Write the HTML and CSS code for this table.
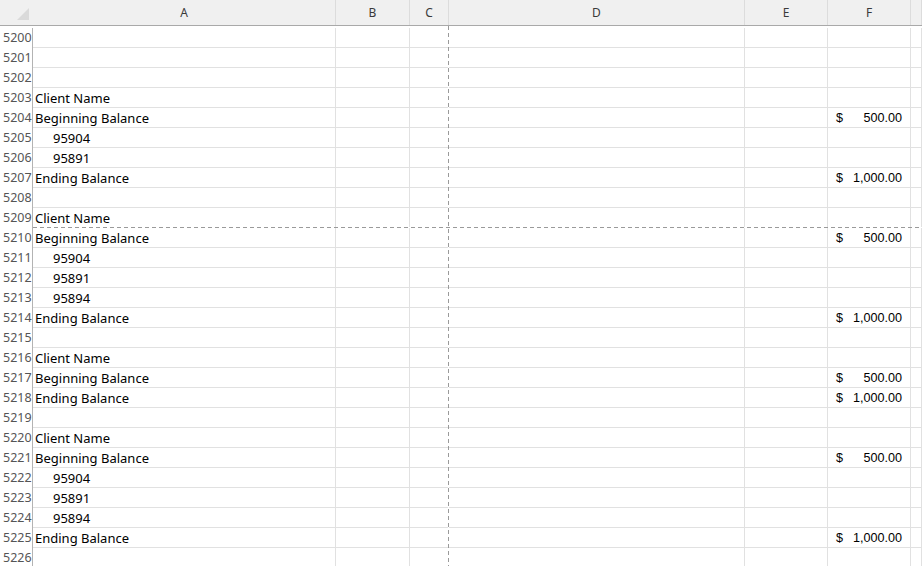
FILE: index.html
```html
<!DOCTYPE html>
<html lang="en">
<head>
  <meta charset="UTF-8" />
  <title>Client Balances</title>
  <link rel="stylesheet" href="styles.css">
</head>
<body>

  <div class="sheet">

    <!-- Column headers -->
    <div class="col-heads">
      <div class="corner">
        <svg width="32" height="25" viewBox="0 0 32 25"><polygon points="29,8 29,20 17,20" fill="#dadada"/></svg>
      </div>
      <div class="ch a">A</div>
      <div class="ch b">B</div>
      <div class="ch c">C</div>
      <div class="ch d">D</div>
      <div class="ch e">E</div>
      <div class="ch f">F</div>
      <div class="ch g"></div>
    </div>

    <!-- Rows -->
    <div class="rows">
      <div class="row"><div class="rn">5200</div><div class="cell a"></div><div class="cell b"></div><div class="cell c"></div><div class="cell d"></div><div class="cell e"></div><div class="cell f"></div><div class="cell g"></div></div>
      <div class="row"><div class="rn">5201</div><div class="cell a"></div><div class="cell b"></div><div class="cell c"></div><div class="cell d"></div><div class="cell e"></div><div class="cell f"></div><div class="cell g"></div></div>
      <div class="row"><div class="rn">5202</div><div class="cell a"></div><div class="cell b"></div><div class="cell c"></div><div class="cell d"></div><div class="cell e"></div><div class="cell f"></div><div class="cell g"></div></div>
      <div class="row"><div class="rn">5203</div><div class="cell a">Client Name</div><div class="cell b"></div><div class="cell c"></div><div class="cell d"></div><div class="cell e"></div><div class="cell f"></div><div class="cell g"></div></div>
      <div class="row"><div class="rn">5204</div><div class="cell a">Beginning Balance</div><div class="cell b"></div><div class="cell c"></div><div class="cell d"></div><div class="cell e"></div><div class="cell f money"><span>$</span><span>500.00</span></div><div class="cell g"></div></div>
      <div class="row"><div class="rn">5205</div><div class="cell a indent">95904</div><div class="cell b"></div><div class="cell c"></div><div class="cell d"></div><div class="cell e"></div><div class="cell f"></div><div class="cell g"></div></div>
      <div class="row"><div class="rn">5206</div><div class="cell a indent">95891</div><div class="cell b"></div><div class="cell c"></div><div class="cell d"></div><div class="cell e"></div><div class="cell f"></div><div class="cell g"></div></div>
      <div class="row"><div class="rn">5207</div><div class="cell a">Ending Balance</div><div class="cell b"></div><div class="cell c"></div><div class="cell d"></div><div class="cell e"></div><div class="cell f money"><span>$</span><span>1,000.00</span></div><div class="cell g"></div></div>
      <div class="row"><div class="rn">5208</div><div class="cell a"></div><div class="cell b"></div><div class="cell c"></div><div class="cell d"></div><div class="cell e"></div><div class="cell f"></div><div class="cell g"></div></div>
      <div class="row"><div class="rn">5209</div><div class="cell a">Client Name</div><div class="cell b"></div><div class="cell c"></div><div class="cell d"></div><div class="cell e"></div><div class="cell f"></div><div class="cell g"></div></div>
      <div class="row"><div class="rn">5210</div><div class="cell a">Beginning Balance</div><div class="cell b"></div><div class="cell c"></div><div class="cell d"></div><div class="cell e"></div><div class="cell f money"><span>$</span><span>500.00</span></div><div class="cell g"></div></div>
      <div class="row"><div class="rn">5211</div><div class="cell a indent">95904</div><div class="cell b"></div><div class="cell c"></div><div class="cell d"></div><div class="cell e"></div><div class="cell f"></div><div class="cell g"></div></div>
      <div class="row"><div class="rn">5212</div><div class="cell a indent">95891</div><div class="cell b"></div><div class="cell c"></div><div class="cell d"></div><div class="cell e"></div><div class="cell f"></div><div class="cell g"></div></div>
      <div class="row"><div class="rn">5213</div><div class="cell a indent">95894</div><div class="cell b"></div><div class="cell c"></div><div class="cell d"></div><div class="cell e"></div><div class="cell f"></div><div class="cell g"></div></div>
      <div class="row"><div class="rn">5214</div><div class="cell a">Ending Balance</div><div class="cell b"></div><div class="cell c"></div><div class="cell d"></div><div class="cell e"></div><div class="cell f money"><span>$</span><span>1,000.00</span></div><div class="cell g"></div></div>
      <div class="row"><div class="rn">5215</div><div class="cell a"></div><div class="cell b"></div><div class="cell c"></div><div class="cell d"></div><div class="cell e"></div><div class="cell f"></div><div class="cell g"></div></div>
      <div class="row"><div class="rn">5216</div><div class="cell a">Client Name</div><div class="cell b"></div><div class="cell c"></div><div class="cell d"></div><div class="cell e"></div><div class="cell f"></div><div class="cell g"></div></div>
      <div class="row"><div class="rn">5217</div><div class="cell a">Beginning Balance</div><div class="cell b"></div><div class="cell c"></div><div class="cell d"></div><div class="cell e"></div><div class="cell f money"><span>$</span><span>500.00</span></div><div class="cell g"></div></div>
      <div class="row"><div class="rn">5218</div><div class="cell a">Ending Balance</div><div class="cell b"></div><div class="cell c"></div><div class="cell d"></div><div class="cell e"></div><div class="cell f money"><span>$</span><span>1,000.00</span></div><div class="cell g"></div></div>
      <div class="row"><div class="rn">5219</div><div class="cell a"></div><div class="cell b"></div><div class="cell c"></div><div class="cell d"></div><div class="cell e"></div><div class="cell f"></div><div class="cell g"></div></div>
      <div class="row"><div class="rn">5220</div><div class="cell a">Client Name</div><div class="cell b"></div><div class="cell c"></div><div class="cell d"></div><div class="cell e"></div><div class="cell f"></div><div class="cell g"></div></div>
      <div class="row"><div class="rn">5221</div><div class="cell a">Beginning Balance</div><div class="cell b"></div><div class="cell c"></div><div class="cell d"></div><div class="cell e"></div><div class="cell f money"><span>$</span><span>500.00</span></div><div class="cell g"></div></div>
      <div class="row"><div class="rn">5222</div><div class="cell a indent">95904</div><div class="cell b"></div><div class="cell c"></div><div class="cell d"></div><div class="cell e"></div><div class="cell f"></div><div class="cell g"></div></div>
      <div class="row"><div class="rn">5223</div><div class="cell a indent">95891</div><div class="cell b"></div><div class="cell c"></div><div class="cell d"></div><div class="cell e"></div><div class="cell f"></div><div class="cell g"></div></div>
      <div class="row"><div class="rn">5224</div><div class="cell a indent">95894</div><div class="cell b"></div><div class="cell c"></div><div class="cell d"></div><div class="cell e"></div><div class="cell f"></div><div class="cell g"></div></div>
      <div class="row"><div class="rn">5225</div><div class="cell a">Ending Balance</div><div class="cell b"></div><div class="cell c"></div><div class="cell d"></div><div class="cell e"></div><div class="cell f money"><span>$</span><span>1,000.00</span></div><div class="cell g"></div></div>
      <div class="row"><div class="rn">5226</div><div class="cell a"></div><div class="cell b"></div><div class="cell c"></div><div class="cell d"></div><div class="cell e"></div><div class="cell f"></div><div class="cell g"></div></div>

      <!-- Page break lines -->
      <div class="page-break-v"></div>
      <div class="page-break-h"></div>
    </div>

  </div>

</body>
</html>
```

FILE: styles.css
```css
* {
  margin: 0;
  padding: 0;
  box-sizing: border-box;
}

body {
  background: #fff;
  font-family: 'Noto Sans', sans-serif;
  overflow: hidden;
  height: 566px;
}

.sheet {
  width: 100%;
  height: 100%;
  overflow: hidden;
}

/* ========== Column headers ========== */
.col-heads {
  display: flex;
  height: 26px;
  background: #f0f0f0;
  border-bottom: 1px solid #a9a9a9;
}

.corner {
  width: 33px;
  flex-shrink: 0;
}

.corner svg {
  display: block;
}

.ch {
  flex-shrink: 0;
  border-right: 1px solid #dcdcdc;
  text-align: center;
  font-size: 12px;
  line-height: 25px;
  color: #3a3a3a;
}

/* column widths (right border included) */
.a { width: 303px; }
.b { width: 74px; }
.c { width: 39px; }
.d { width: 296px; }
.e { width: 83px; }
.f { width: 83px; }
.g { flex: 1 1 0; min-width: 0; }

/* ========== Rows ========== */
.rows {
  position: relative;
  padding-top: 2px;
}

.row {
  display: flex;
  height: 20px;
}

.rn {
  width: 33px;
  flex-shrink: 0;
  border-right: 1px solid #b3b3b3;
  padding: 0 0 1px 3px;
  font-size: 12.5px;
  line-height: 18px;
  color: #555;
  display: flex;
  align-items: flex-end;
}

.cell {
  flex-shrink: 0;
  border-right: 1px solid #e1e1e1;
  border-bottom: 1px solid #e1e1e1;
  padding: 0 0 1px 2px;
  font-size: 13px;
  line-height: 16px;
  color: #000;
  white-space: nowrap;
  display: flex;
  align-items: flex-end;
}

.cell.indent {
  padding-left: 20px;
}

.cell.money {
  justify-content: space-between;
  padding: 0 8px 1px 8px;
  font-family: 'Liberation Sans', Arial, sans-serif;
  font-size: 12.6px;
}

/* ========== Page breaks ========== */
.page-break-v {
  position: absolute;
  top: 0;
  bottom: 0;
  left: 448px;
  width: 1px;
  background: repeating-linear-gradient(to bottom, #9a9a9a 0 4px, #fff 4px 7px);
}

.page-break-h {
  position: absolute;
  top: 201px;
  left: 33px;
  right: 0;
  height: 1px;
  background: repeating-linear-gradient(to right, #9a9a9a 0 4px, #fff 4px 7px);
}
```
